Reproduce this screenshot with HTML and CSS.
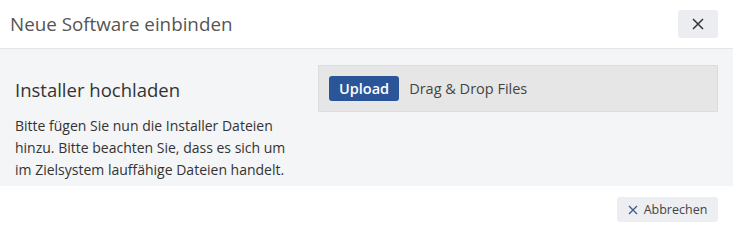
FILE: index.html
```html
<!DOCTYPE html>
<html lang="de">
<head>
<meta charset="utf-8">
<link rel="stylesheet" href="styles.css">
</head>
<body>
<div class="modal">
  <div class="header">
    <div class="title">Neue Software einbinden</div>
    <button class="close" aria-label="Schließen">
      <svg width="14" height="14" viewBox="0 0 14 14"><path d="M2 2L12 12M12 2L2 12" stroke="#333" stroke-width="1.5" fill="none"/></svg>
    </button>
  </div>
  <div class="body">
    <div class="left">
      <h2 class="heading">Installer hochladen</h2>
      <p class="text">Bitte fügen Sie nun die Installer Dateien hinzu. Bitte beachten Sie, dass es sich um im Zielsystem lauffähige Dateien handelt.</p>
    </div>
    <div class="right">
      <div class="drop">
        <button class="upload">Upload</button>
        <span class="droptext">Drag &amp; Drop Files</span>
      </div>
    </div>
  </div>
  <div class="footer">
    <button class="cancel">
      <svg width="10" height="10" viewBox="0 0 10 10"><path d="M1 1L9 9M9 1L1 9" stroke="#3f5a8f" stroke-width="1.3" fill="none"/></svg>
      <span>Abbrechen</span>
    </button>
  </div>
</div>
</body>
</html>
```
FILE: styles.css
```css
* { box-sizing: border-box; }
html, body { margin: 0; padding: 0; background: #fff; }
body { font-family: "Open Sans", "Noto Sans", sans-serif; color: #333; }
.modal { width: 733px; height: 232px; display: flex; flex-direction: column; }
.header {
  height: 49px;
  border-bottom: 1px solid #e4e5e8;
  display: flex; align-items: center; justify-content: space-between;
  padding: 0 15px 0 10px;
}
.title { font-size: 18.8px; color: #555; }
.close {
  width: 40px; height: 28px; border: 0; border-radius: 3px;
  background: #ecedf1; display: flex; align-items: center; justify-content: center;
  padding: 0; margin-top: 0;
}
.body {
  height: 137px; background: #f4f5f7;
  display: flex; padding: 16px 15px 0 15px;
}
.left { width: 303px; }
.heading { margin: 12px 0 0 0; font-size: 18.5px; font-weight: 400; color: #333; line-height: 26px; }
.text { margin: 12px 0 0 0; font-size: 14px; line-height: 22px; color: #333; width: 284px; }
.right { flex: 1; }
.drop {
  height: 47px; background: #e6e6e6; border: 1px solid #dcdcdc;
  display: flex; align-items: center; padding: 0 10px;
}
.upload {
  height: 25px; padding: 0 10px; border: 0; border-radius: 3px;
  background: #2a5598; color: #fff; font-family: inherit; font-size: 14.5px; font-weight: 600;
  line-height: 25px;
}
.droptext { margin-left: 10px; font-size: 14.5px; color: #444; }
.footer {
  flex: 1; display: flex; justify-content: flex-end; align-items: flex-start;
  padding: 11px 15px 0 0;
}
.cancel {
  height: 25px; width: 101px; border: 0; border-radius: 3px; background: #eceef2;
  display: flex; align-items: center; justify-content: center; gap: 6px;
  font-family: inherit; font-size: 12.5px; color: #444; padding: 0;
}
```
